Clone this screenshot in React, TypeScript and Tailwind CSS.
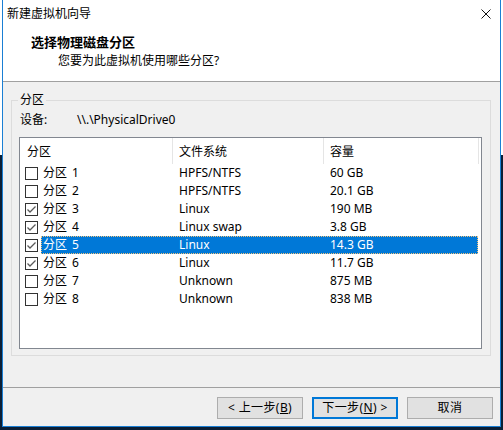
import React from 'react';

interface Partition {
  num: number;
  fs: string;
  size: string;
  checked: boolean;
}

const partitions: Partition[] = [
  { num: 1, fs: 'HPFS/NTFS', size: '60 GB', checked: false },
  { num: 2, fs: 'HPFS/NTFS', size: '20.1 GB', checked: false },
  { num: 3, fs: 'Linux', size: '190 MB', checked: true },
  { num: 4, fs: 'Linux swap', size: '3.8 GB', checked: true },
  { num: 5, fs: 'Linux', size: '14.3 GB', checked: true },
  { num: 6, fs: 'Linux', size: '11.7 GB', checked: true },
  { num: 7, fs: 'Unknown', size: '875 MB', checked: false },
  { num: 8, fs: 'Unknown', size: '838 MB', checked: false },
];

const SELECTED = 4;

function CheckBox({ checked }: { checked: boolean }) {
  return (
    <span className="w-[13px] h-[13px] border border-[#333333] bg-white shrink-0 flex items-center justify-center">
      {checked && (
        <svg width="11" height="11" viewBox="0 0 11 11">
          <polyline points="1.5,5.5 4,8 9.5,2.5" fill="none" stroke="#5a5a5a" strokeWidth="1.3" />
        </svg>
      )}
    </span>
  );
}

function Button({ children, primary }: { children: React.ReactNode; primary?: boolean }) {
  return (
    <div
      className={`w-[86px] h-[22px] flex items-center justify-center bg-[#e1e1e1] text-[12px] leading-[16px] tracking-[0.4px] text-black ${
        primary ? 'border-2 border-[#0078d7]' : 'border border-[#adadad]'
      }`}
    >
      {children}
    </div>
  );
}

export default function App() {
  return (
    <div
      className="w-[503px] h-[430px] overflow-hidden bg-[linear-gradient(to_bottom,#ffffff_36%,#0b1f36_36%)]"
      style={{ fontFamily: '"Noto Sans", "Noto Sans CJK SC", sans-serif' }}
    >
      <div className="ml-[2px] w-[499px] h-[427px] border-x border-b border-[#1a7fd4] bg-[#f0f0f0] flex flex-col">
        {/* title bar */}
        <div className="h-[30px] bg-white flex justify-between">
          <div className="pl-[4px] pt-[6px] text-[12px] leading-[16px] text-black">新建虚拟机向导</div>
          <div className="pt-[9px] pr-[9px]">
            <svg width="10" height="10" viewBox="0 0 10 10">
              <path d="M0.5 0.5 L9.5 9.5 M9.5 0.5 L0.5 9.5" stroke="#111" strokeWidth="1" />
            </svg>
          </div>
        </div>

        {/* header */}
        <div className="h-[52px] bg-white border-b border-[#a0a0a0] pt-[4px] text-black">
          <div className="pl-[28px] text-[13px] leading-[16px] font-bold">选择物理磁盘分区</div>
          <div className="pl-[55px] mt-[3px] text-[12px] leading-[16px]">您要为此虚拟机使用哪些分区?</div>
        </div>

        {/* body */}
        <div className="flex-1">
          <fieldset className="mt-[10px] ml-[8px] mr-[9px] border border-[#dcdcdc] pb-[6px]">
            <legend className="ml-[6px] px-[2px] text-[12px] leading-[16px] text-black">分区</legend>
            <div className="pt-[4px] pl-[8px] flex text-[12px] leading-[16px] text-black">
              <span className="w-[57px]">设备:</span>
              <span>\\.\PhysicalDrive0</span>
            </div>

            <div className="mt-[9px] ml-[7px] mr-[8px] h-[212px] border border-[#828790] bg-white text-[12px] leading-[16px] text-black">
              <div className="h-[26px] flex">
                <div className="w-[153px] border-r border-[#e5e5e5] pl-[7px] pt-[6px]">分区</div>
                <div className="w-[151px] border-r border-[#e5e5e5] pl-[6px] pt-[6px]">文件系统</div>
                <div className="w-[155px] border-r border-[#e5e5e5] pl-[6px] pt-[6px]">容量</div>
              </div>
              {partitions.map((p, i) => {
                const sel = i === SELECTED;
                return (
                  <div key={p.num} className="h-[18px] flex items-center pl-[5px]">
                    <CheckBox checked={p.checked} />
                    <div
                      className={`ml-[3px] w-[437px] h-[18px] flex items-center ${
                        sel ? 'bg-[#0078d7] text-white border border-dotted border-[#f3c27a]' : 'border border-transparent'
                      }`}
                    >
                      <span className="w-[130px] pl-[1px]">
                        分区<span className="ml-[5px]">{p.num}</span>
                      </span>
                      <span className="w-[151px] pl-[7px]">{p.fs}</span>
                      <span className="pl-[7px]">{p.size}</span>
                    </div>
                  </div>
                );
              })}
            </div>
          </fieldset>
        </div>

        {/* footer */}
        <div className="h-[39px] border-t border-[#a0a0a0] pt-[9px] pr-[7px] flex justify-end gap-[9px]">
          <Button>
            &lt; 上一步(<span className="underline">B</span>)
          </Button>
          <Button primary>
            下一步(<span className="underline">N</span>) &gt;
          </Button>
          <Button>取消</Button>
        </div>
      </div>
    </div>
  );
}
